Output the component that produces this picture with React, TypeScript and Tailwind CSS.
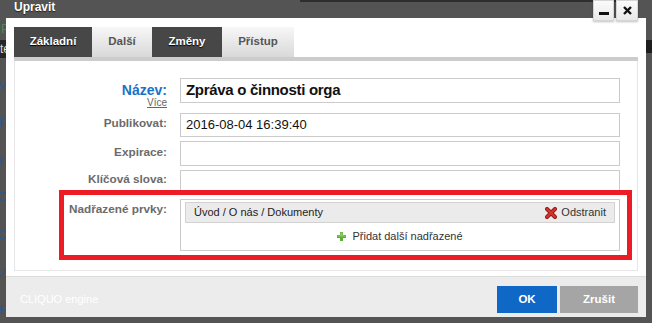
import React from "react";

const tabs = [
  { label: "Základní", cls: "w-[78px] bg-[#474747] text-white [text-shadow:0_1px_1px_#000]" },
  { label: "Další", cls: "w-[60px] bg-linear-to-b from-[#f7f7f7] to-[#d9d9d9] text-[#555]" },
  { label: "Změny", cls: "w-[70px] bg-[#474747] text-white [text-shadow:0_1px_1px_#000]" },
  { label: "Přístup", cls: "w-[72px] bg-linear-to-b from-[#f7f7f7] to-[#d9d9d9] text-[#555]" },
];

function RemoveIcon() {
  return (
    <svg width="12" height="12" viewBox="0 0 12 12" className="shrink-0">
      <path d="M2 2 L10 10 M10 2 L2 10" stroke="#8e1b17" strokeWidth="4" strokeLinecap="round" />
      <path d="M2 2 L10 10 M10 2 L2 10" stroke="#d2332c" strokeWidth="2.4" strokeLinecap="round" />
    </svg>
  );
}

function AddIcon() {
  return (
    <svg width="9" height="9" viewBox="0 0 9 9" className="shrink-0">
      <path d="M3 0 H6 V3 H9 V6 H6 V9 H3 V6 H0 V3 H3 Z" fill="#5fae3a" />
      <path d="M3.5 0.5 H5.5 V3.5 H8.5 V4.5 H0.5 V3.5 H3.5 Z" fill="#8fd06a" />
    </svg>
  );
}

function Field({ value, bold }: { value?: string; bold?: boolean }) {
  return (
    <div
      className={`flex-1 h-full border border-[#cbcbcb] bg-white pl-[5px] flex items-center text-[#111] ${
        bold ? "text-[15px] font-bold tracking-[-0.3px]" : "text-[13px]"
      }`}
    >
      {value}
    </div>
  );
}

export default function App() {
  return (
    <div className="relative w-[652px] h-[323px] overflow-hidden bg-[#545454] font-['Liberation_Sans',Arial,sans-serif]">
      {/* page behind the dialog */}
      <div className="absolute left-[300px] top-0 w-[321px] h-[2px] bg-[#2e2e2e]" />
      <div className="absolute left-0 top-[40px] w-[14px] h-[18px] bg-[#262626] text-[12px] text-[#ddd] leading-[18px]">te</div>
      <div className="absolute left-[646px] top-[40px] w-[6px] h-[13px] bg-[#1e1e1e]" />
      <div className="absolute left-[1px] top-[19px] text-[13px] text-[#4e8a4e]">P</div>
      <div className="absolute left-[-2px] top-[75px] text-[13px] text-[#2d5a86]">V</div>
      <div className="absolute left-[-1px] top-[113px] text-[13px] text-[#2d5a86]">P</div>
      <div className="absolute left-[-1px] top-[152px] text-[13px] text-[#2d5a86]">E</div>
      <div className="absolute left-[-3px] top-[187px] text-[13px] text-[#2d5a86]">O</div>
      <div className="absolute left-[-3px] top-[225px] text-[13px] text-[#2d5a86]">O</div>
      <div className="absolute left-[-2px] top-[264px] text-[13px] text-[#2d5a86]">Z</div>
      <div className="absolute left-[-1px] top-[300px] text-[13px] text-[#2d5a86]">P</div>

      {/* title */}
      <div className="relative h-[18px] pl-[14px] text-[12px] font-bold text-white leading-[15px] [text-shadow:0_1px_1px_#222]">
        Upravit
      </div>

      {/* dialog */}
      <div className="relative ml-[6px] w-[640px] bg-white">
        <div className="pt-[9px] px-[8px] flex h-[39px]">
          {tabs.map((t) => (
            <div
              key={t.label}
              className={`h-[30px] flex items-center justify-center text-[11.5px] font-bold ${t.cls}`}
            >
              {t.label}
            </div>
          ))}
        </div>
        <div className="mx-[8px] h-[4px] bg-[#cccccc]" />

        <div className="relative mx-[8px] border-x border-b border-[#e6e6e6] pt-[17px] pb-[19px] pr-[17px]">
          <div className="flex h-[35px]">
            <div className="w-[152px] h-[25px] text-right pt-[4px]">
              <div className="text-[14px] leading-[17px] font-bold text-[#1a72c6]">Název:</div>
              <div className="text-[10px] leading-[12px] mt-[-2px] text-[#666] underline">Více</div>
            </div>
            <div className="flex-1 ml-[13px] h-[25px] flex">
              <Field value="Zpráva o činnosti orga" bold />
            </div>
          </div>
          <div className="flex h-[28px]">
            <div className="w-[152px] text-right pt-[2px] text-[11.75px] leading-[16px] font-bold text-[#6b6b6b]">
              Publikovat:
            </div>
            <div className="flex-1 ml-[13px] h-[24px] flex">
              <Field value="2016-08-04 16:39:40" />
            </div>
          </div>
          <div className="flex h-[29px]">
            <div className="w-[152px] text-right pt-[3px] text-[11.75px] leading-[16px] font-bold text-[#6b6b6b]">
              Expirace:
            </div>
            <div className="flex-1 ml-[13px] h-[25px] flex">
              <Field />
            </div>
          </div>
          <div className="flex h-[29px]">
            <div className="w-[152px] text-right pt-[1px] text-[11.75px] leading-[16px] font-bold text-[#6b6b6b]">
              Klíčová slova:
            </div>
            <div className="flex-1 ml-[13px] h-[25px] flex">
              <Field />
            </div>
          </div>
          <div className="flex h-[52px]">
            <div className="w-[152px] text-right pt-[2px] text-[11.75px] leading-[16px] font-bold text-[#6b6b6b]">
              Nadřazené prvky:
            </div>
            <div className="flex-1 ml-[13px] h-[52px] border border-[#cbcbcb] px-[4px] pt-[2px]">
              <div className="h-[21px] bg-[#ebebeb] border border-[#d2d2d2] flex items-center justify-between pl-[8px] pr-[8px] text-[11px] text-[#222]">
                <span>Úvod / O nás / Dokumenty</span>
                <span className="flex items-center gap-[4px] text-[#333]">
                  <RemoveIcon />
                  Odstranit
                </span>
              </div>
              <div className="h-[26px] flex items-center justify-center gap-[6px] text-[11px] text-[#333]">
                <AddIcon />
                Přidat další nadřazené
              </div>
            </div>
          </div>

          {/* highlight */}
          <div className="absolute left-[44px] top-[129px] w-[573px] h-[70px] border-[5px] border-[#ed1c24]" />
        </div>

        <div className="h-[5px]" />
        <div className="h-[41px] border-t border-[#dcdcdc] bg-[#ececec] flex items-start justify-between pt-[9px] pl-[14px] pr-[8px]">
          <div className="text-[11px] leading-[27px] text-white">CLIQUO engine</div>
          <div className="flex gap-[3px]">
            <div className="w-[60px] h-[27px] bg-[#0f67c6] flex items-center justify-center text-[11.5px] font-bold text-white">
              OK
            </div>
            <div className="w-[78px] h-[27px] bg-[#a5a5a5] flex items-center justify-center text-[11.5px] font-bold text-white">
              Zrušit
            </div>
          </div>
        </div>
      </div>

      {/* window controls */}
      <div className="absolute left-[593px] top-0 flex gap-[2px]">
        <div className="w-[21px] h-[21px] bg-linear-to-b from-[#fbfbfb] to-[#e9e9e9] border border-[#d5d5d5] shadow-[0_1px_2px_rgba(0,0,0,0.25)] flex items-end justify-center pb-[5px]">
          <div className="w-[10px] h-[3px] bg-[#111]" />
        </div>
        <div className="w-[22px] h-[21px] bg-linear-to-b from-[#fbfbfb] to-[#e9e9e9] border border-[#d5d5d5] shadow-[0_1px_2px_rgba(0,0,0,0.25)] flex items-center justify-center">
          <svg width="9" height="9" viewBox="0 0 9 9">
            <path d="M1 1 L8 8 M8 1 L1 8" stroke="#111" strokeWidth="2.4" />
          </svg>
        </div>
      </div>
    </div>
  );
}
